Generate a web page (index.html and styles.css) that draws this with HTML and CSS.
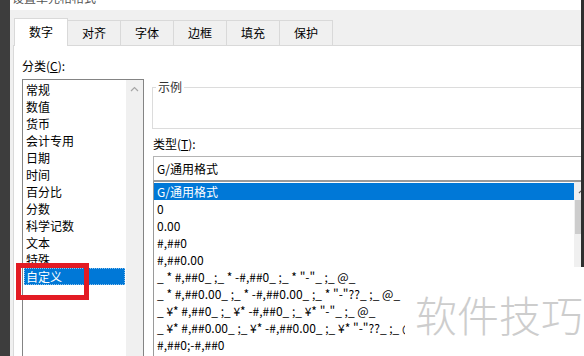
FILE: index.html
```html
<!DOCTYPE html>
<html lang="zh-CN">
<head>
<meta charset="utf-8">
<title>设置单元格格式</title>
<link rel="stylesheet" href="styles.css">
</head>
<body>
<div class="frame-left"></div>
<div class="dialog">
  <div class="titlebar"><span class="title">设置单元格格式</span></div>
  <div class="tabbar">
    <div class="tab active">数字</div>
    <div class="tab">对齐</div>
    <div class="tab">字体</div>
    <div class="tab">边框</div>
    <div class="tab">填充</div>
    <div class="tab">保护</div>
  </div>
  <div class="panel">
    <div class="col-left">
      <div class="label">分类(<u>C</u>):</div>
      <div class="listbox cat">
        <div class="items">
          <div class="item">常规</div>
          <div class="item">数值</div>
          <div class="item">货币</div>
          <div class="item">会计专用</div>
          <div class="item">日期</div>
          <div class="item">时间</div>
          <div class="item">百分比</div>
          <div class="item">分数</div>
          <div class="item">科学记数</div>
          <div class="item">文本</div>
          <div class="item">特殊</div>
          <div class="item selected">自定义</div>
        </div>
        <div class="vscroll">
          <div class="arrow"><svg width="9" height="6" viewBox="0 0 9 6"><path d="M1 5 L4.5 1.5 L8 5" fill="none" stroke="#a6a6a6" stroke-width="1.2"/></svg></div>
        </div>
      </div>
    </div>
    <div class="col-right">
      <div class="group"><span class="legend">示例</span></div>
      <div class="label type-label">类型(<u>T</u>):</div>
      <div class="input">G/通用格式</div>
      <div class="listbox types">
        <div class="items">
          <div class="item selected-plain">G/通用格式</div>
          <div class="item">0</div>
          <div class="item">0.00</div>
          <div class="item">#,##0</div>
          <div class="item">#,##0.00</div>
          <div class="item">_ * #,##0_ ;_ * -#,##0_ ;_ * "-"_ ;_ @_ </div>
          <div class="item">_ * #,##0.00_ ;_ * -#,##0.00_ ;_ * "-"??_ ;_ @_ </div>
          <div class="item">_ ¥* #,##0_ ;_ ¥* -#,##0_ ;_ ¥* "-"_ ;_ @_ </div>
          <div class="item">_ ¥* #,##0.00_ ;_ ¥* -#,##0.00_ ;_ ¥* "-"??_ ;_ @_ </div>
          <div class="item">#,##0;-#,##0</div>
        </div>
        <div class="vscroll short">
          <div class="arrow"><svg width="9" height="6" viewBox="0 0 9 6"><path d="M1 5 L4.5 1.5 L8 5" fill="none" stroke="#606060" stroke-width="1.2"/></svg></div>
          <div class="thumb"></div>
        </div>
      </div>
    </div>
  </div>
</div>
<div class="frame-right"></div>
<div class="highlight"></div>
<div class="watermark">软件技巧</div>
</body>
</html>
```

FILE: styles.css
```css
* { box-sizing: border-box; }
html, body { margin: 0; }
body {
  width: 584px;
  height: 356px;
  overflow: hidden;
  display: flex;
  align-items: flex-start;
  background: #fff;
  font-family: "Noto Sans CJK SC", "Noto Sans", sans-serif;
  font-size: 12px;
  color: #000;
  position: relative;
}
.frame-left { width: 10px; height: 356px; flex: none; background: #3d3d3d; }
.frame-right { width: 3px; height: 267px; flex: none; background: #2f2f2f; }
.dialog {
  width: 571px;
  height: 356px;
  flex: none;
  overflow: hidden;
  display: flex;
  flex-direction: column;
  background: #f0f0f0;
}
.titlebar { height: 10px; flex: none; background: #fff; overflow: hidden; padding-left: 2px; }
.title { display: block; line-height: 12px; margin-top: -8px; color: #555; }
.tabbar { height: 35px; flex: none; display: flex; align-items: flex-end; padding-left: 4px; }
.tab {
  width: 54px;
  height: 25px;
  border: 1px solid #d9d9d9;
  border-bottom: none;
  margin-left: -1px;
  background: #f0f0f0;
  display: flex;
  align-items: center;
  justify-content: center;
  line-height: 14px;
}
.tab:first-child { margin-left: 0; }
.tab.active {
  height: 28px;
  margin-bottom: -1px;
  background: #fff;
  position: relative;
  z-index: 1;
  padding-bottom: 1px;
}
.panel {
  flex: 1;
  margin-left: 3px;
  background: #fff;
  border-top: 1px solid #d9d9d9;
  border-left: 1px solid #d9d9d9;
  padding: 11px 0 0 8px;
  display: flex;
  gap: 9px;
}
.col-left { width: 122px; flex: none; }
.col-right { width: 439px; flex: none; }
.label { height: 17px; line-height: 17px; white-space: nowrap; }
.listbox { border: 1px solid #848484; display: flex; align-items: flex-start; background: #fff; }
.cat { margin-top: 5px; height: 300px; }
.cat .items { width: 103px; flex: none; padding: 1px 1px 0; }
.item { height: 17px; line-height: 17px; padding-left: 2px; white-space: pre; }
.item.selected {
  background: #0078d7;
  color: #fff;
  outline: 1px dotted rgba(255, 255, 255, 0.55);
  outline-offset: -1px;
}
.vscroll { width: 17px; flex: none; background: #f0f0f0; height: 100%; }
.arrow { height: 17px; display: flex; align-items: center; justify-content: center; }
.group {
  margin-top: 30px;
  margin-left: -1px;
  height: 42px;
  border: 1px solid #dcdcdc;
  padding-left: 3px;
}
.legend {
  display: block;
  width: fit-content;
  margin-top: -8px;
  line-height: 14px;
  padding: 0 2px;
  background: #fff;
  color: #333;
}
.type-label { margin-top: 6px; }
.input {
  margin-top: 4px;
  height: 25px;
  border: 1px solid #b4b4b4;
  border-bottom-color: #9a9a9a;
  line-height: 23px;
  padding-left: 3px;
  white-space: nowrap;
}
.types { height: 200px; border-color: #9a9a9a; }
.types .items { flex: 1; padding-top: 1px; }
.types .item { padding-left: 3px; }
.item.selected-plain { background: #0078d7; color: #fff; }
.vscroll.short { height: 85px; }
.thumb { width: 15px; height: 34px; margin: 1px 0 0 1px; background: #cdcdcd; }
.highlight {
  position: absolute;
  left: 16px;
  top: 263px;
  width: 73px;
  height: 37px;
  border: 5px solid #e31b23;
}
.watermark {
  position: absolute;
  left: 405px;
  top: 282px;
  width: 179px;
  height: 64px;
  padding-left: 10px;
  background: #fff;
  color: #cdcdcd;
  font-size: 42px;
  line-height: 64px;
  white-space: nowrap;
  font-weight: 300;
}
```
